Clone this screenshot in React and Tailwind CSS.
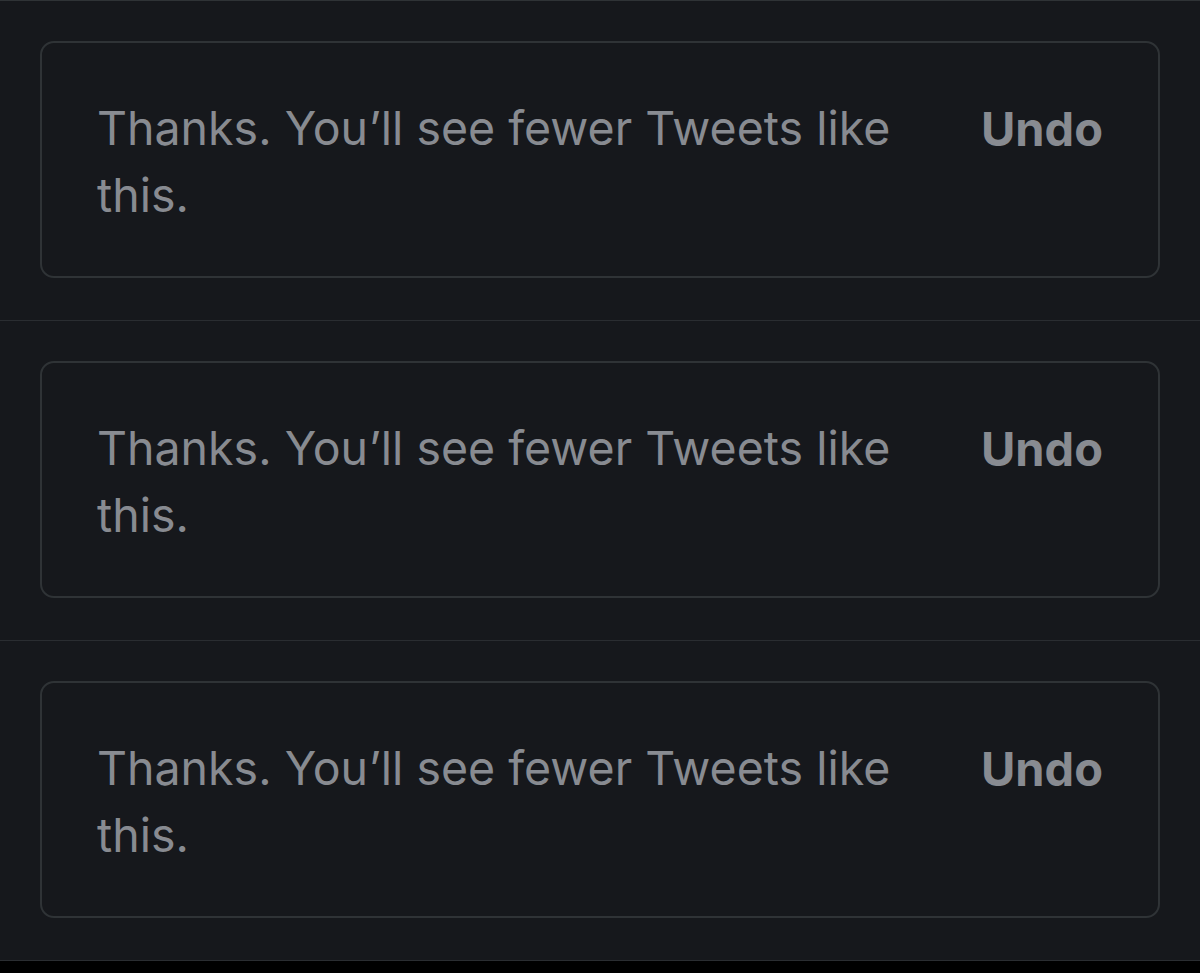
export default function App() {
  const items = [0, 1, 2];
  return (
    <div
      className="w-[1200px] h-[973px] bg-black overflow-hidden"
      style={{ fontFamily: 'Inter, "Noto Sans", sans-serif' }}
    >
      <div className="bg-[#16181c] border-t border-[#2f3336]">
        {items.map((i) => (
          <div
            key={i}
            className="border-b border-[#2a2d31] px-10 pt-10 pb-[42px]"
          >
            <div className="border-2 border-[#2f3336] rounded-[14px] h-[237px] pl-[55px] pr-[55px] pt-[52px] flex items-start">
              <div className="flex-1 text-[46.5px] leading-[67px] text-[#888b91]">
                Thanks. You’ll see fewer Tweets like this.
              </div>
              <div className="ml-[60px] text-[47px] leading-[67px] font-bold text-[#888b91]">
                Undo
              </div>
            </div>
          </div>
        ))}
      </div>
    </div>
  );
}
